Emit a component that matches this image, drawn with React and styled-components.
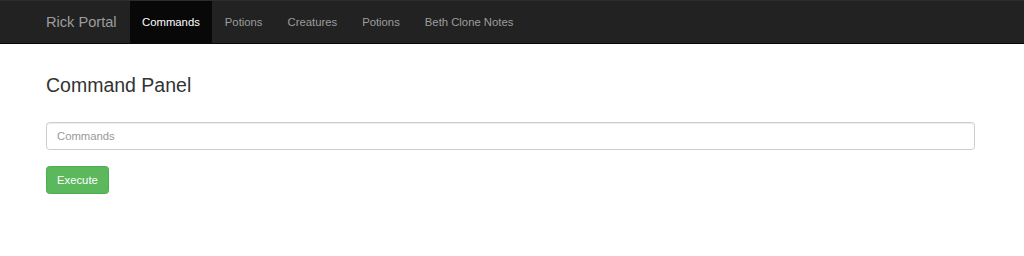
import React from "react";
import styled, { createGlobalStyle } from "styled-components";

const Global = createGlobalStyle`
  body {
    margin: 0;
    font-family: "Liberation Sans", Arial, sans-serif;
    font-size: 11.3px;
    color: #333;
    background: #fff;
  }
  * { box-sizing: border-box; }
`;

const links = ["Commands", "Potions", "Creatures", "Potions", "Beth Clone Notes"];

export default function App() {
  return (
    <>
      <Global />
      <Navbar>
        <NavInner>
          <Brand href="#">Rick Portal</Brand>
          <NavList>
            {links.map((l, i) => (
              <NavItem key={i} active={i === 0}>
                <a href="#">{l}</a>
              </NavItem>
            ))}
          </NavList>
        </NavInner>
      </Navbar>
      <Main>
        <Title>Command Panel</Title>
        <Input placeholder="Commands" />
        <Button>Execute</Button>
      </Main>
    </>
  );
}

const Navbar = styled.nav`
  background: #222;
  border-top: 1px solid #2a2c33;
  border-bottom: 1px solid #080808;
  height: 44px;
`;
const NavInner = styled.div`
  display: flex;
  height: 100%;
  padding-left: 33px;
`;
const Brand = styled.a`
  display: flex;
  align-items: center;
  padding: 0 13px;
  font-size: 14.6px;
  color: #9d9d9d;
  text-decoration: none;
`;
const NavList = styled.ul`
  display: flex;
  list-style: none;
  margin: 0;
  padding: 0;
`;
const NavItem = styled.li`
  display: flex;
  a {
    display: flex;
    align-items: center;
    padding: 0 12.5px;
    color: ${(p) => (p.active ? "#fff" : "#9d9d9d")};
    background: ${(p) => (p.active ? "#080808" : "transparent")};
    text-decoration: none;
  }
`;
const Main = styled.div`
  padding: 0 49px 0 46px;
  display: flex;
  flex-direction: column;
  align-items: flex-start;
`;
const Title = styled.h3`
  font-size: 19.5px;
  font-weight: 500;
  margin: 31px 0 26px;
  line-height: 1.1;
`;
const Input = styled.input`
  width: 100%;
  height: 28px;
  padding: 0 10px;
  font: inherit;
  font-size: 11.3px;
  color: #555;
  border: 1px solid #ccc;
  border-radius: 3.5px;
  box-shadow: inset 0 1px 1px rgba(0, 0, 0, 0.075);
  &::placeholder { color: #999; }
`;
const Button = styled.button`
  margin-top: 16px;
  height: 28px;
  padding: 0 10px;
  font: inherit;
  font-size: 11.3px;
  color: #fff;
  background: #5cb85c;
  border: 1px solid #4cae4c;
  border-radius: 3.5px;
`;
